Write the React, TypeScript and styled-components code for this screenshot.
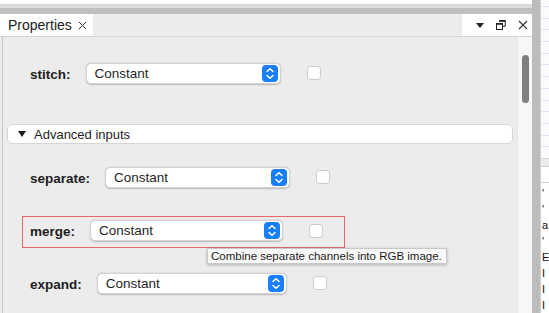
import React from "react";
import styled, { createGlobalStyle } from "styled-components";

const GlobalStyle = createGlobalStyle`
  html, body {
    margin: 0;
    padding: 0;
    width: 549px;
    height: 313px;
    overflow: hidden;
    background: #ffffff;
  }
  * { box-sizing: border-box; }
  body {
    font-family: "Liberation Sans", Arial, sans-serif;
    color: #1f1f1f;
  }
`;

const Screen = styled.div`
  display: grid;
  grid-template-columns: 532px 8px 9px;
  width: 549px;
  height: 313px;
`;

const Main = styled.div`
  display: flex;
  flex-direction: column;
  min-height: 0;
`;

const TopStrip = styled.div`
  height: 5px;
  background: #fdfdfd;
  border-bottom: 1px solid #d6d6d6;
`;

const HSash = styled.div`
  height: 9px;
  background: linear-gradient(#dcdcdc 0 3px, #bfbfbf 3px);
`;

const VSash = styled.div`
  background: #bcbcbc;
`;

const TabBar = styled.div`
  display: flex;
  align-items: stretch;
  height: 22px;
  background: #ececec;
`;

const Tab = styled.div`
  display: flex;
  align-items: center;
  gap: 6px;
  width: 93px;
  padding-left: 8px;
  background: #ffffff;
  font-size: 14px;
  color: #222;
`;

const TabTools = styled.div`
  margin-left: auto;
  width: 70px;
  display: flex;
  align-items: center;
  gap: 12px;
  padding-left: 14px;
  background: #ffffff;
`;

const Body = styled.div`
  flex: 1;
  display: flex;
  min-height: 0;
  padding-left: 2px;
  background: #ececec;
  border-top: 1px solid #d4d4d4;
`;

const View = styled.div`
  flex: 1;
  display: flex;
  flex-direction: column;
  border-left: 1px solid #c9c9c9;
  padding-top: 20px;
`;

const Track = styled.div`
  width: 15px;
  background: #f7f7f7;
  border-left: 1px solid #e6e6e6;
  padding: 18px 0 0 4px;
`;

const Thumb = styled.div`
  width: 7px;
  height: 48px;
  border-radius: 4px;
  background: #7f7f7f;
`;

const Row = styled.div<{ $top: number }>`
  display: flex;
  align-items: center;
  height: 32px;
  margin-top: ${(p) => p.$top}px;
  padding-left: 27px;
`;

const HighlightRow = styled.div<{ $top: number }>`
  position: relative;
  display: flex;
  align-items: center;
  width: 323px;
  height: 32px;
  margin: ${(p) => p.$top}px 0 0 19px;
  padding: 0 0 3px 7px;
  border: 1.5px solid #e26a6a;
`;

const Label = styled.span`
  font-size: 13.5px;
  font-weight: bold;
  color: #1e1e1e;
  margin-right: 15px;
  padding-top: 2px;
`;

const Select = styled.div<{ $width: number }>`
  display: flex;
  align-items: center;
  justify-content: space-between;
  width: ${(p) => p.$width}px;
  height: 21px;
  padding: 0 2px 0 8px;
  background: #ffffff;
  border-radius: 5px;
  border: 0.5px solid #d3d3d3;
  box-shadow: 0 0.5px 1.5px rgba(0, 0, 0, 0.22);
  font-size: 13.5px;
  color: #1f1f1f;
`;

const Check = styled.div`
  width: 14px;
  height: 14px;
  margin-left: 26px;
  background: #ffffff;
  border: 1px solid #cbcbcb;
  border-radius: 3.5px;
`;

const Disclosure = styled.div`
  display: flex;
  align-items: center;
  gap: 8px;
  height: 20px;
  margin: 35px 4px 0 4px;
  padding-left: 10px;
  background: #ffffff;
  border: 1px solid #d6d6d6;
  border-radius: 5px;
  font-size: 13px;
  color: #1f1f1f;
`;

const Tooltip = styled.div`
  position: absolute;
  left: 184px;
  top: 30.5px;
  width: 240px;
  height: 16px;
  padding-left: 3px;
  display: flex;
  align-items: center;
  background: #f9f9f9;
  border: 0.5px solid #c8c8c8;
  box-shadow: 0 1px 3px rgba(0, 0, 0, 0.25);
  font-size: 11.5px;
  color: #1c1c1c;
  white-space: nowrap;
  z-index: 2;
`;

const Side = styled.div`
  display: flex;
  flex-direction: column;
  border-left: 1px solid #d2d2d2;
  background: #ffffff;
  overflow: hidden;
`;

const SideTable = styled.div`
  height: 163px;
  padding-top: 6px;
  background: #fbfbfd;
  border-bottom: 1px solid #d6d6d6;
`;

const SideLine = styled.div`
  height: 11.7px;
  border-top: 1px solid #e3e1f3;
`;

const SideGap = styled.div`
  height: 10px;
  background: #ececec;
  border-bottom: 1px solid #d0d0d0;
`;

const SideHead = styled.div`
  height: 22px;
  background: #ffffff;
  border-bottom: 1px solid #d0d0d0;
`;

const SideText = styled.div`
  padding: 2px 0 0 1px;
  font-size: 11px;
  line-height: 16px;
  white-space: nowrap;
  color: #111;
`;

const Blue = () => (
  <svg width="16" height="17" viewBox="0 0 16 17">
    <rect width="16" height="17" rx="4" fill="#1a7ffb" />
    <path d="M5 6.5 L8 3.8 L11 6.5 M5 10.5 L8 13.2 L11 10.5" stroke="#fff" strokeWidth="1.5" fill="none" strokeLinecap="round" strokeLinejoin="round" />
  </svg>
);

const CloseGlyph = ({ size }: { size: number }) => (
  <svg width={size} height={size} viewBox="0 0 10 10">
    <path d="M1 1 L9 9 M9 1 L1 9" stroke="#333" strokeWidth="1.1" />
  </svg>
);

const Field = ({ label, width }: { label: string; width: number }) => (
  <>
    <Label>{label}</Label>
    <Select $width={width}>
      Constant
      <Blue />
    </Select>
    <Check />
  </>
);

export default function App() {
  return (
    <>
      <GlobalStyle />
      <Screen>
        <Main>
          <TopStrip />
          <HSash />
          <TabBar>
            <Tab>
              Properties
              <CloseGlyph size={9} />
            </Tab>
            <TabTools>
              <svg width="8" height="5" viewBox="0 0 8 5">
                <path d="M0 0 H8 L4 5 Z" fill="#222" />
              </svg>
              <svg width="10" height="10" viewBox="0 0 10 10">
                <path d="M3.5 0.75 H9.25 V6.25 H7" stroke="#222" strokeWidth="1" fill="none" />
                <path d="M3 0.9 H9.5" stroke="#222" strokeWidth="1.8" />
                <rect x="0.5" y="3.5" width="6" height="6" stroke="#222" strokeWidth="1" fill="none" />
                <path d="M0.5 3.9 H6.5" stroke="#222" strokeWidth="1.8" />
              </svg>
              <CloseGlyph size={10} />
            </TabTools>
          </TabBar>
          <Body>
            <View>
              <Row $top={0}>
                <Field label="stitch:" width={195} />
              </Row>
              <Disclosure>
                <svg width="8" height="6" viewBox="0 0 8 6">
                  <path d="M0 0 H8 L4 6 Z" fill="#1a1a1a" />
                </svg>
                Advanced inputs
              </Disclosure>
              <Row $top={17}>
                <Field label="separate:" width={185} />
              </Row>
              <HighlightRow $top={23}>
                <Field label="merge:" width={193} />
                <Tooltip>Combine separate channels into RGB image.</Tooltip>
              </HighlightRow>
              <Row $top={19}>
                <Field label="expand:" width={190} />
              </Row>
            </View>
            <Track>
              <Thumb />
            </Track>
          </Body>
        </Main>
        <VSash />
        <Side>
          <SideTable>
            {Array.from({ length: 13 }).map((_, i) => (
              <SideLine key={i} />
            ))}
          </SideTable>
          <SideGap />
          <SideHead />
          <SideText>
            '<br />'<br />a<br />'<br />E<br />I<br />I<br />I
          </SideText>
        </Side>
      </Screen>
    </>
  );
}
